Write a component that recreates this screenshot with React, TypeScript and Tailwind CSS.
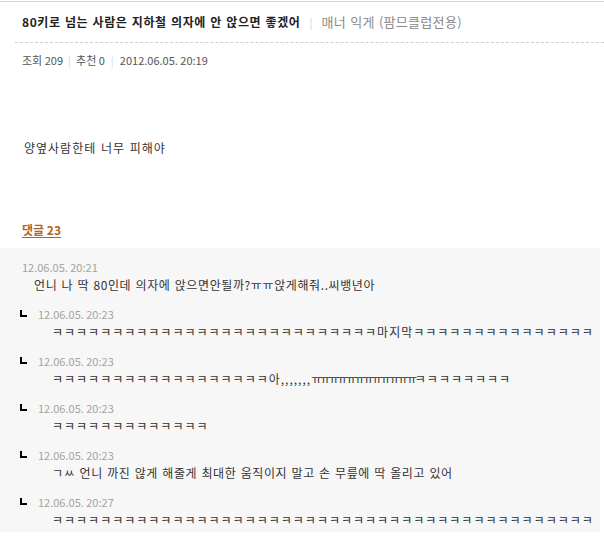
import React from "react";

const font = "font-['Noto_Sans_CJK_KR','Noto_Sans',sans-serif]";

const k = (n: number) => "ㅋ".repeat(n);

type Reply = { date: string; body: React.ReactNode };

const replies: Reply[] = [
  { date: "12.06.05. 20:23", body: <>{k(27)}마지막{k(15)}</> },
  {
    date: "12.06.05. 20:23",
    body: (
      <>
        {k(18)}아,,,,,,,<span className="tracking-[-2.4px]">ㅠㅠㅠㅠㅠㅠㅠㅠㅠㅠㅠㅠ</span>
        {k(8)}
      </>
    ),
  },
  { date: "12.06.05. 20:23", body: <>{k(13)}</> },
  {
    date: "12.06.05. 20:23",
    body: <span className="tracking-[0.6px]">ㄱㅆ 언니 까진 않게 해줄게 최대한 움직이지 말고 손 무릎에 딱 올리고 있어</span>,
  },
  { date: "12.06.05. 20:27", body: <>{k(45)}</> },
];

function ReplyItem({ r }: { r: Reply }) {
  return (
    <div className="mt-[11px]">
      <div className="flex items-center h-[18px] pl-[20px]">
        <div className="w-[7px] h-[7px] border-l-2 border-b-2 border-black -mt-[2px]" />
        <span className="ml-[11px] text-[11px] text-[#a3a3a3] leading-[18px]">{r.date}</span>
      </div>
      <div className="pl-[52px] text-[12px] leading-[18px] text-[#333] whitespace-nowrap tracking-[1px] [word-spacing:1px]">
        {r.body}
      </div>
    </div>
  );
}

export default function App() {
  return (
    <div className={`w-full bg-white ${font}`}>
      <div className="pt-[1px]">
        <div className="h-px bg-[#d6d6d6]" />
      </div>

      {/* title */}
      <div className="h-[40px] flex items-center pl-[22px]">
        <span className="text-[12px] font-bold text-[#222] tracking-[0.6px] [word-spacing:1px]">
          80키로 넘는 사람은 지하철 의자에 안 앉으면 좋겠어
        </span>
        <span className="mx-[9px] text-[11px] text-[#d0d0d0]">|</span>
        <span className="text-[13px] text-[#8a8a8a] tracking-[0.3px] [word-spacing:1px]">매너 익게 (팜므클럽전용)</span>
      </div>
      <div className="ml-[15px] border-t border-dashed border-[#cfcfcf]" />

      {/* meta */}
      <div className="pt-[8px] pl-[22px] flex items-center h-[26px] text-[11px] text-[#555] leading-[18px]">
        <span>조회 209</span>
        <span className="mx-[5px] text-[#d8d8d8]">|</span>
        <span>추천 0</span>
        <span className="mx-[6px] text-[#d8d8d8]">|</span>
        <span>2012.06.05. 20:19</span>
      </div>

      {/* body */}
      <div className="mt-[70px] pl-[24px] text-[12px] leading-[18px] text-[#333] tracking-[1px] [word-spacing:1px]">
        양옆사람한테 너무 피해야
      </div>

      <div className="mt-[62px] pl-[22px] leading-[18px]">
        <span className="text-[12px] font-bold text-[#b0641e] underline underline-offset-2">댓글 23</span>
      </div>

      {/* comments */}
      <div className="mt-[9px] bg-[#f7f7f7] pt-[10px] pb-[3px] w-[600px] overflow-hidden">
        <div className="pl-[22px] text-[11px] text-[#a3a3a3] leading-[18px]">12.06.05. 20:21</div>
        <div className="pl-[34px] text-[12px] leading-[18px] text-[#333] tracking-[0.6px] [word-spacing:1px]">
          언니 나 딱 80인데 의자에 앉으면안될까?ㅠㅠ앉게해줘..씨뱅년아
        </div>
        {replies.map((r, i) => (
          <ReplyItem key={i} r={r} />
        ))}
      </div>
    </div>
  );
}
